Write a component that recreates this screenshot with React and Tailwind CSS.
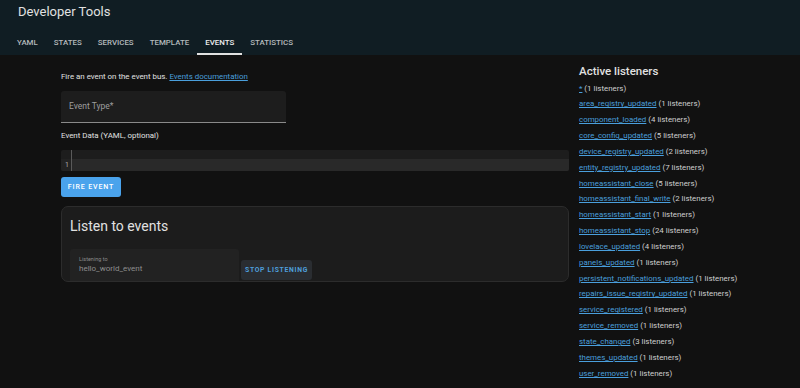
const TABS = ['YAML', 'STATES', 'SERVICES', 'TEMPLATE', 'EVENTS', 'STATISTICS']

const LISTENERS = [
  ['*', 1],
  ['area_registry_updated', 1],
  ['component_loaded', 4],
  ['core_config_updated', 5],
  ['device_registry_updated', 2],
  ['entity_registry_updated', 7],
  ['homeassistant_close', 5],
  ['homeassistant_final_write', 2],
  ['homeassistant_start', 1],
  ['homeassistant_stop', 24],
  ['lovelace_updated', 4],
  ['panels_updated', 1],
  ['persistent_notifications_updated', 1],
  ['repairs_issue_registry_updated', 1],
  ['service_registered', 1],
  ['service_removed', 1],
  ['state_changed', 3],
  ['themes_updated', 1],
  ['user_removed', 1],
]

export default function App() {
  return (
    <div className="w-[800px] h-[388px] overflow-hidden bg-[#111111] font-['Roboto',sans-serif]">
      <header className="h-[55px] bg-[#101d23]">
        <div className="h-[24px] pl-[18px] flex items-center text-[13px] text-[#e1e1e1]">
          Developer Tools
        </div>
        <nav className="flex h-[31px] pl-[9px]">
          {TABS.map((tab) => (
            <div
              key={tab}
              className={
                tab === 'EVENTS'
                  ? 'flex flex-col h-full px-[8px] pt-[14px] border-b-2 border-[#e1e1e1] text-[7.9px] leading-[10px] font-medium text-[#eeeeee]'
                  : 'flex flex-col h-full px-[8px] pt-[14px] border-b-2 border-transparent text-[7.9px] leading-[10px] font-medium text-[#b4b9bc]'
              }
            >
              {tab}
            </div>
          ))}
        </nav>
      </header>

      <div className="flex">
        <div className="ml-[61px] w-[508px]">
          <p className="mt-[16px] text-[7.9px] leading-[12px] text-[#e1e1e1]">
            Fire an event on the event bus.{' '}
            <a className="text-[#4a9fdc] underline">Events documentation</a>
          </p>

          <div className="mt-[8px] w-[225px] h-[32px] rounded-t-[3px] bg-[#1d1d1d] border-b border-[#8a8a8a] flex items-center pl-[8px] text-[8.5px] text-[#9e9e9e]">
            Event Type*
          </div>

          <p className="mt-[7px] text-[7.9px] leading-[12px] text-[#e1e1e1]">
            Event Data (YAML, optional)
          </p>

          <div className="mt-[8px] h-[21px] rounded-[2px] overflow-hidden flex bg-[#1d1d1d]">
            <div className="w-[11px] flex flex-col border-r border-[#5a5a5a]">
              <div className="h-[9px]" />
              <div className="flex-1 bg-[#222222] text-[7px] text-[#aaaaaa] flex items-center justify-end pr-[2px]">
                1
              </div>
            </div>
            <div className="flex-1 flex flex-col">
              <div className="h-[9px]" />
              <div className="flex-1 bg-[#292929]" />
            </div>
          </div>

          <button className="mt-[6px] w-[60px] h-[20px] rounded-[3px] bg-[#4aa3ec] text-white text-[7px] font-medium tracking-[0.9px] flex items-center justify-center">
            FIRE EVENT
          </button>

          <div className="mt-[9px] h-[76px] rounded-[7px] border border-[#2c2c2c] bg-[#1c1c1c] overflow-hidden pl-[8px]">
            <h2 className="pt-[11px] text-[14px] leading-[17px] text-[#e1e1e1]">Listen to events</h2>
            <div className="mt-[14px] flex items-start gap-[2px]">
              <div className="w-[169px] h-[33px] rounded-t-[3px] bg-[#222222] pl-[9px] pt-[7px]">
                <div className="text-[5.5px] leading-[6px] text-[#8a8a8a]">Listening to</div>
                <div className="mt-[1px] text-[8px] leading-[11px] text-[#8e8e8e]">hello_world_event</div>
              </div>
              <button className="mt-[11px] w-[71px] h-[20px] rounded-[3px] bg-[#2a2d31] text-[#4e9fdc] text-[6.8px] font-bold tracking-[0.7px] flex items-center justify-center">
                STOP LISTENING
              </button>
            </div>
          </div>
        </div>

        <div className="ml-[10px] flex-1">
          <h3 className="mt-[10px] text-[11.5px] leading-[13px] font-medium text-[#e1e1e1]">Active listeners</h3>
          <ul className="mt-[2.5px]">
            {LISTENERS.map(([name, count]) => (
              <li key={name} className="text-[7.9px] leading-[15.85px] text-[#cfcfcf]">
                <a className="text-[#4a9fdc] underline">{name}</a> ({count} listeners)
              </li>
            ))}
          </ul>
        </div>
      </div>
    </div>
  )
}
